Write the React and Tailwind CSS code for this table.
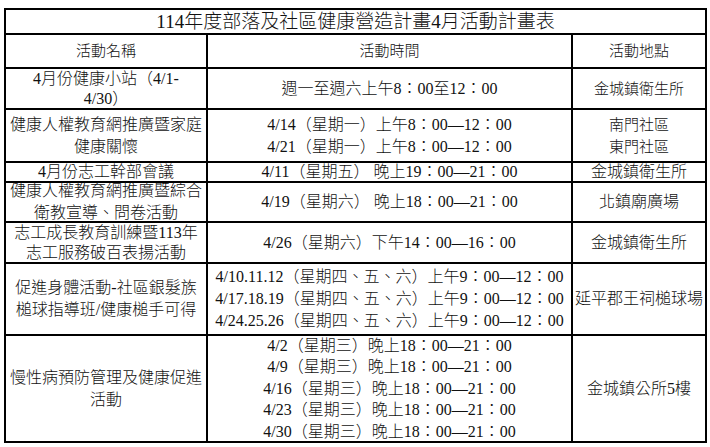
import React from "react";

const cell =
  "bg-white flex flex-col items-center justify-center text-center whitespace-nowrap";

function Lines({ lines, cls = "" }) {
  return (
    <>
      {lines.map((l, i) => (
        <div key={i} className={cls}>
          {l}
        </div>
      ))}
    </>
  );
}

export default function App() {
  const font = {
    fontFamily: '"Liberation Serif", "Noto Sans CJK TC", serif',
  };
  const rows = [
    {
      a: ["4月份健康小站（4/1-", "4/30）"],
      aCls: "leading-[20px]",
      b: ["週一至週六上午8：00至12：00"],
      c: ["金城鎮衛生所"],
      cCls: "text-[15px] leading-[22px]",
    },
    {
      a: ["健康人權教育網推廣暨家庭", "健康關懷"],
      b: ["4/14（星期一）上午8：00—12：00", "4/21（星期一）上午8：00—12：00"],
      c: ["南門社區", "東門社區"],
      cCls: "text-[15px] leading-[22px]",
    },
    {
      a: ["4月份志工幹部會議"],
      aCls: "leading-[18px]",
      b: ["4/11（星期五） 晚上19：00—21：00"],
      bCls: "leading-[18px]",
      c: ["金城鎮衛生所"],
      cCls: "leading-[18px]",
    },
    {
      a: ["健康人權教育網推廣暨綜合", "衛教宣導、問卷活動"],
      b: ["4/19（星期六） 晚上18：00—21：00"],
      c: ["北鎮廟廣場"],
    },
    {
      a: ["志工成長教育訓練暨113年", "志工服務破百表揚活動"],
      aCls: "leading-[20px]",
      b: ["4/26（星期六）下午14：00—16：00"],
      c: ["金城鎮衛生所"],
    },
    {
      a: ["促進身體活動-社區銀髮族", "槌球指導班/健康槌手可得"],
      b: [
        "4/10.11.12（星期四、五、六）上午9：00—12：00",
        "4/17.18.19（星期四、五、六）上午9：00—12：00",
        "4/24.25.26（星期四、五、六）上午9：00—12：00",
      ],
      bCls: "leading-[21.7px]",
      c: ["延平郡王祠槌球場"],
    },
    {
      a: ["慢性病預防管理及健康促進", "活動"],
      b: [
        "4/2（星期三）晚上18：00—21：00",
        "4/9（星期三）晚上18：00—21：00",
        "4/16（星期三）晚上18：00—21：00",
        "4/23（星期三）晚上18：00—21：00",
        "4/30（星期三）晚上18：00—21：00",
      ],
      bCls: "leading-[21.4px]",
      c: ["金城鎮公所5樓"],
    },
  ];

  return (
    <div
      className="bg-white w-[710px] h-[447px] pt-[8px] pl-[4px] text-[16px] text-[#111] font-light"
      style={font}
    >
      <div className="grid w-[703px] grid-cols-[200px_363px_132px] grid-rows-[23px_32px_39px_51px_18px_38px_39px_70px_105px] gap-[2px] bg-black p-[2px]">
        <div className={`${cell} col-span-3 text-[19px] leading-[23px]`}>
          114年度部落及社區健康營造計畫4月活動計畫表
        </div>
        <div className={`${cell} text-[15px]`}>活動名稱</div>
        <div className={`${cell} text-[15px]`}>活動時間</div>
        <div className={`${cell} text-[15px]`}>活動地點</div>
        {rows.map((r, i) => (
          <React.Fragment key={i}>
            <div className={cell}>
              <Lines lines={r.a} cls={r.aCls || "leading-[22px]"} />
            </div>
            <div className={cell}>
              <Lines lines={r.b} cls={r.bCls || "leading-[22px]"} />
            </div>
            <div className={cell}>
              <Lines lines={r.c} cls={r.cCls || "leading-[22px]"} />
            </div>
          </React.Fragment>
        ))}
      </div>
    </div>
  );
}
